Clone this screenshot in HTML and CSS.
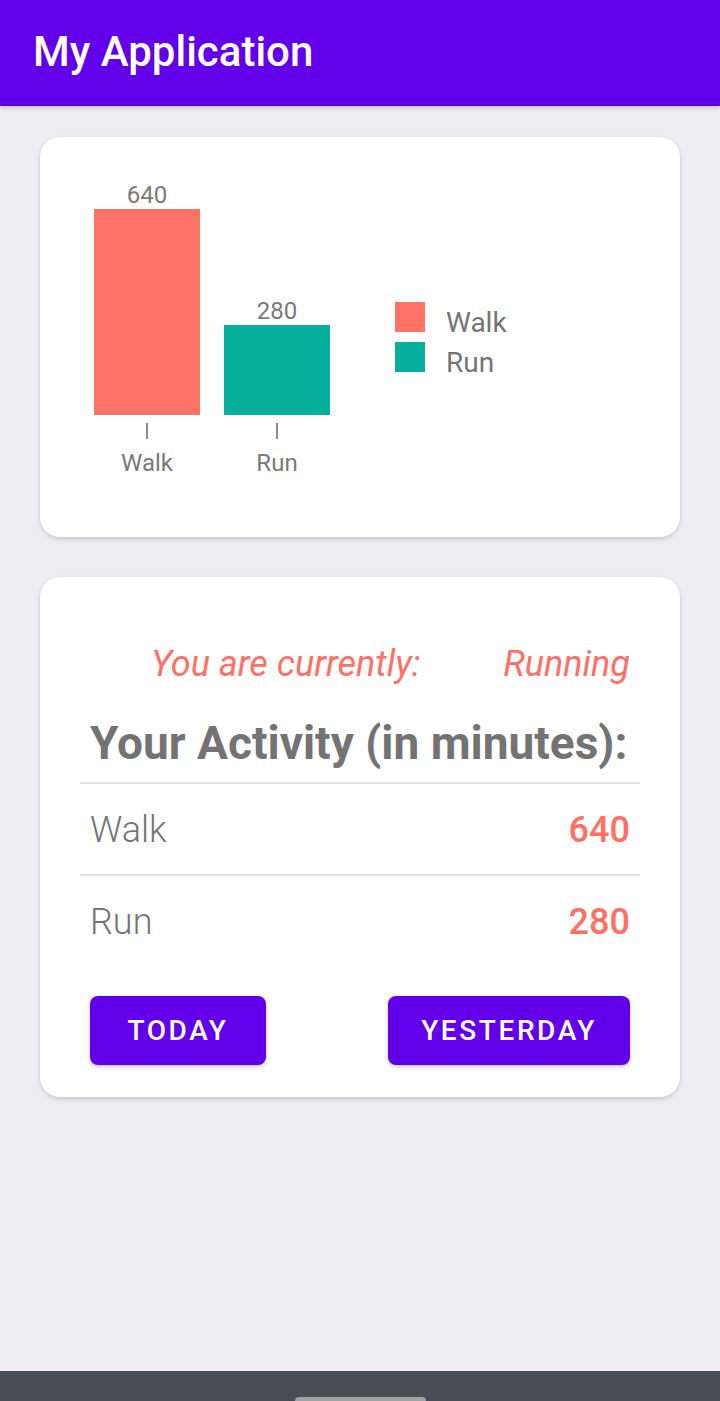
FILE: index.html
```html
<!DOCTYPE html>
<html lang="en">
<head>
<meta charset="utf-8">
<title>My Application</title>
<link rel="stylesheet" href="styles.css">
</head>
<body>
<div class="screen">
  <header class="appbar">
    <h1 class="appbar-title">My Application</h1>
  </header>
  <main class="content">
    <section class="card chart-card">
      <div class="chart">
        <div class="plot">
          <div class="col">
            <span class="value">640</span>
            <div class="bar bar-walk" style="height:206px"></div>
          </div>
          <div class="col">
            <span class="value">280</span>
            <div class="bar bar-run" style="height:90px"></div>
          </div>
        </div>
        <div class="axis">
          <div class="axis-item"><span class="tick"></span><span class="axis-label">Walk</span></div>
          <div class="axis-item"><span class="tick"></span><span class="axis-label">Run</span></div>
        </div>
      </div>
      <ul class="legend">
        <li class="legend-row"><span class="swatch swatch-walk"></span><span class="legend-text">Walk</span></li>
        <li class="legend-row"><span class="swatch swatch-run"></span><span class="legend-text">Run</span></li>
      </ul>
    </section>

    <section class="card activity-card">
      <div class="status">
        <span class="status-label">You are currently:</span>
        <span class="status-value">Running</span>
      </div>
      <h2 class="activity-title">Your Activity (in minutes):</h2>
      <div class="stat-row">
        <span class="stat-name">Walk</span>
        <span class="stat-value">640</span>
      </div>
      <div class="stat-row">
        <span class="stat-name">Run</span>
        <span class="stat-value">280</span>
      </div>
      <div class="actions">
        <button class="btn">TODAY</button>
        <button class="btn">YESTERDAY</button>
      </div>
    </section>
  </main>
  <footer class="navbar"><span class="handle"></span></footer>
</div>
</body>
</html>
```

FILE: styles.css
```css
* { box-sizing: border-box; }

html, body {
  margin: 0;
  padding: 0;
}

body {
  font-family: Roboto, "Noto Sans", "Liberation Sans", sans-serif;
  background: #eeedf2;
  color: #757575;
}

.screen {
  width: 720px;
  height: 1401px;
  display: flex;
  flex-direction: column;
  overflow: hidden;
}

.appbar {
  height: 106px;
  background: #6200ea;
  display: flex;
  align-items: center;
  padding-left: 33px;
  box-shadow: 0 2px 4px rgba(0, 0, 0, 0.18);
  position: relative;
  z-index: 1;
}

.appbar-title {
  margin: 0;
  color: #ffffff;
  font-size: 42px;
  font-weight: 500;
  line-height: 50px;
  padding-bottom: 2px;
}

.content {
  flex: 1;
  padding: 31px 40px 0;
  display: flex;
  flex-direction: column;
  gap: 40px;
}

.card {
  background: #ffffff;
  border-radius: 20px;
  box-shadow: 0 2px 4px rgba(0, 0, 0, 0.16), 0 0 2px rgba(0, 0, 0, 0.06);
}

/* ---------- chart card ---------- */
.chart-card {
  height: 400px;
  display: flex;
  align-items: flex-start;
  padding: 44px 0 0 54px;
}

.chart {
  display: flex;
  flex-direction: column;
}

.plot {
  height: 234px;
  display: flex;
  align-items: flex-end;
  gap: 24px;
}

.col {
  width: 106px;
  display: flex;
  flex-direction: column;
  align-items: center;
}

.value {
  font-size: 24px;
  line-height: 28px;
  color: #7a7a7a;
}

.bar {
  width: 106px;
}

.bar-walk { background: #ff7366; }
.bar-run { background: #06af9b; }

.axis {
  display: flex;
  gap: 24px;
}

.axis-item {
  width: 106px;
  display: flex;
  flex-direction: column;
  align-items: center;
}

.tick {
  width: 2px;
  height: 16px;
  margin-top: 8px;
  background: #8a8a8a;
}

.axis-label {
  margin-top: 10px;
  font-size: 24px;
  line-height: 28px;
  color: #7a7a7a;
}

.legend {
  list-style: none;
  margin: 121px 0 0 65px;
  padding: 0;
  display: flex;
  flex-direction: column;
  gap: 10px;
}

.legend-row {
  display: flex;
  height: 30px;
}

.swatch {
  width: 30px;
  height: 30px;
}

.swatch-walk { background: #ff7366; }
.swatch-run { background: #06af9b; }

.legend-text {
  margin: 11px 0 0 21px;
  font-size: 28px;
  line-height: 20px;
  color: #757575;
}

/* ---------- activity card ---------- */
.activity-card {
  padding: 66px 40px 32px;
  display: flex;
  flex-direction: column;
}

.status {
  display: flex;
  justify-content: space-between;
  padding: 0 10px 0 71px;
  font-size: 36px;
  line-height: 42px;
  font-style: italic;
  color: #ff7064;
}

.activity-title {
  margin: 31px 0 0;
  padding: 0 10px 12px;
  font-size: 46px;
  line-height: 54px;
  font-weight: 700;
  color: #737373;
  border-bottom: 2px solid #e0e0e0;
}

.stat-row {
  display: flex;
  justify-content: space-between;
  padding: 25px 10px 23px;
  font-size: 36px;
  line-height: 42px;
}

.stat-row + .stat-row {
  border-top: 2px solid #e0e0e0;
}

.stat-name {
  font-weight: 300;
  color: #757575;
}

.stat-value {
  font-weight: 500;
  color: #ff7064;
}

.actions {
  display: flex;
  justify-content: space-between;
  padding: 0 10px;
  margin-top: 30px;
}

.btn {
  height: 69px;
  min-width: 176px;
  padding: 0 33px;
  border: none;
  border-radius: 8px;
  background: #6200ea;
  color: #ffffff;
  font-family: Roboto, "Noto Sans", "Liberation Sans", sans-serif;
  font-size: 28px;
  font-weight: 500;
  letter-spacing: 2.6px;
  box-shadow: 0 2px 4px rgba(0, 0, 0, 0.22);
}

/* ---------- nav bar ---------- */
.navbar {
  height: 30px;
  background: #464d54;
  display: flex;
  justify-content: center;
  align-items: flex-end;
}

.handle {
  width: 131px;
  height: 4px;
  margin-left: 1px;
  background: #9da2a3;
  border-radius: 4px 4px 0 0;
}
```
